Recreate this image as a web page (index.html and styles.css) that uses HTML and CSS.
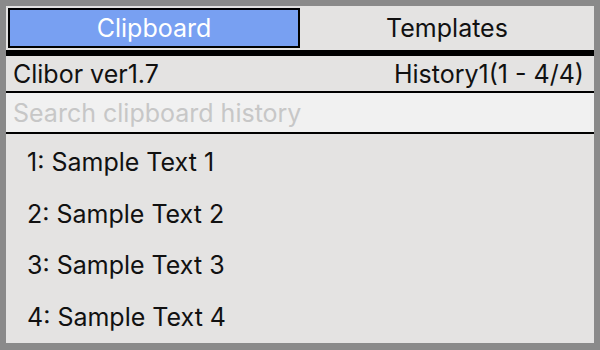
FILE: index.html
```html
<!DOCTYPE html>
<html>
<head>
<meta charset="utf-8">
<link rel="stylesheet" href="styles.css">
</head>
<body>
<div class="app">
  <div class="tabs">
    <div class="tab active">Clipboard</div>
    <div class="tab">Templates</div>
  </div>
  <div class="header">
    <span>Clibor ver1.7</span>
    <span>History1(1 - 4/4)</span>
  </div>
  <div class="search">Search clipboard history</div>
  <ul class="list">
    <li class="item">1: Sample Text 1</li>
    <li class="item">2: Sample Text 2</li>
    <li class="item">3: Sample Text 3</li>
    <li class="item">4: Sample Text 4</li>
  </ul>
</div>
</body>
</html>
```
FILE: styles.css
```css
html, body {
  margin: 0;
  padding: 0;
}
body {
  background: #8a8a8a;
  padding: 6px 6px 7px 6px;
  font-family: Inter, "Liberation Sans", sans-serif;
  font-size: 25px;
  color: #111;
}
.app {
  width: 588px;
  height: 337px;
  background: #e4e3e2;
  display: flex;
  flex-direction: column;
  overflow: hidden;
}
.tabs {
  display: grid;
  grid-template-columns: 294px 294px;
  height: 44px;
  border-bottom: 6px solid #000;
}
.tab {
  display: flex;
  align-items: center;
  justify-content: center;
}
.tab.active {
  margin: 2px 0 2px 2px;
  border: 2px solid #000;
  background: #78a0f2;
  color: #fff;
}
.header {
  height: 36px;
  display: flex;
  justify-content: space-between;
  align-items: center;
  padding: 0 10px 0 7px;
  border-bottom: 2px solid #000;
}
.search {
  height: 39px;
  background: #f1f1f1;
  color: #c7c7c7;
  display: flex;
  align-items: center;
  padding-left: 7px;
  border-bottom: 2px solid #000;
}
.list {
  list-style: none;
  margin: 0;
  padding: 2px 0 0 21px;
}
.item {
  height: 51.7px;
  display: flex;
  align-items: center;
}
```
